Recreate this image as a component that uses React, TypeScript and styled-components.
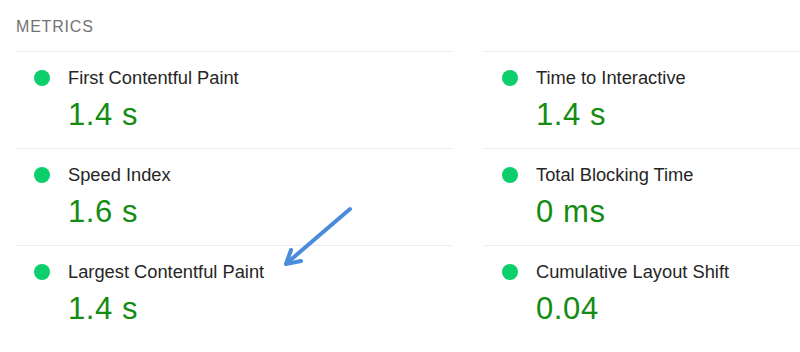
import styled, { createGlobalStyle } from "styled-components";

const GlobalStyle = createGlobalStyle`
  html, body {
    margin: 0;
    padding: 0;
    background: #ffffff;
    overflow: hidden;
  }
  body {
    font-family: "Liberation Sans", Arial, Helvetica, sans-serif;
  }
`;

const Page = styled.div`
  position: relative;
  width: 800px;
  height: 352px;
  overflow: hidden;
  padding: 0 0 0 16px;
  box-sizing: border-box;
`;

const Header = styled.h2`
  margin: 0;
  height: 51px;
  padding-top: 18px;
  box-sizing: border-box;
  font-size: 16px;
  line-height: 18px;
  font-weight: 400;
  letter-spacing: 0.8px;
  text-transform: uppercase;
  color: #737373;
`;

const Grid = styled.div`
  display: grid;
  grid-template-columns: 436px 436px;
  column-gap: 32px;
`;

const Metric = styled.div`
  border-top: 1px solid #ececec;
  padding: 14px 0 15px 18px;
  display: grid;
  grid-template-columns: 16px 1fr;
  column-gap: 18px;
  align-items: center;
`;

const Dot = styled.span<{ $color: string }>`
  width: 16px;
  height: 16px;
  border-radius: 50%;
  background: ${(p) => p.$color};
`;

const Label = styled.div`
  font-size: 18.3px;
  line-height: 24px;
  color: #262626;
`;

const Value = styled.div`
  grid-column: 2;
  margin-top: 7px;
  font-size: 31px;
  line-height: 36px;
  letter-spacing: 0.6px;
  color: #148c14;
`;

const Arrow = styled.svg`
  position: absolute;
  left: 278px;
  top: 201px;
  pointer-events: none;
`;

interface MetricItem {
  label: string;
  value: string;
}

const metrics: MetricItem[] = [
  { label: "First Contentful Paint", value: "1.4 s" },
  { label: "Time to Interactive", value: "1.4 s" },
  { label: "Speed Index", value: "1.6 s" },
  { label: "Total Blocking Time", value: "0 ms" },
  { label: "Largest Contentful Paint", value: "1.4 s" },
  { label: "Cumulative Layout Shift", value: "0.04" },
];

export default function App() {
  return (
    <>
      <GlobalStyle />
      <Page>
        <Header>Metrics</Header>
        <Grid>
          {metrics.map((m) => (
            <Metric key={m.label}>
              <Dot $color="#0cce6b" />
              <Label>{m.label}</Label>
              <Value>{m.value}</Value>
            </Metric>
          ))}
        </Grid>
        {/* annotation arrow pointing at LCP */}
        <Arrow width="80" height="70" viewBox="0 0 80 70">
          <g stroke="#4a8bdc" strokeWidth="4" strokeLinecap="round" strokeLinejoin="round" fill="none">
            <line x1="72" y1="8" x2="9" y2="62" />
            <polyline points="13,49 8,63 23,60" />
          </g>
        </Arrow>
      </Page>
    </>
  );
}
